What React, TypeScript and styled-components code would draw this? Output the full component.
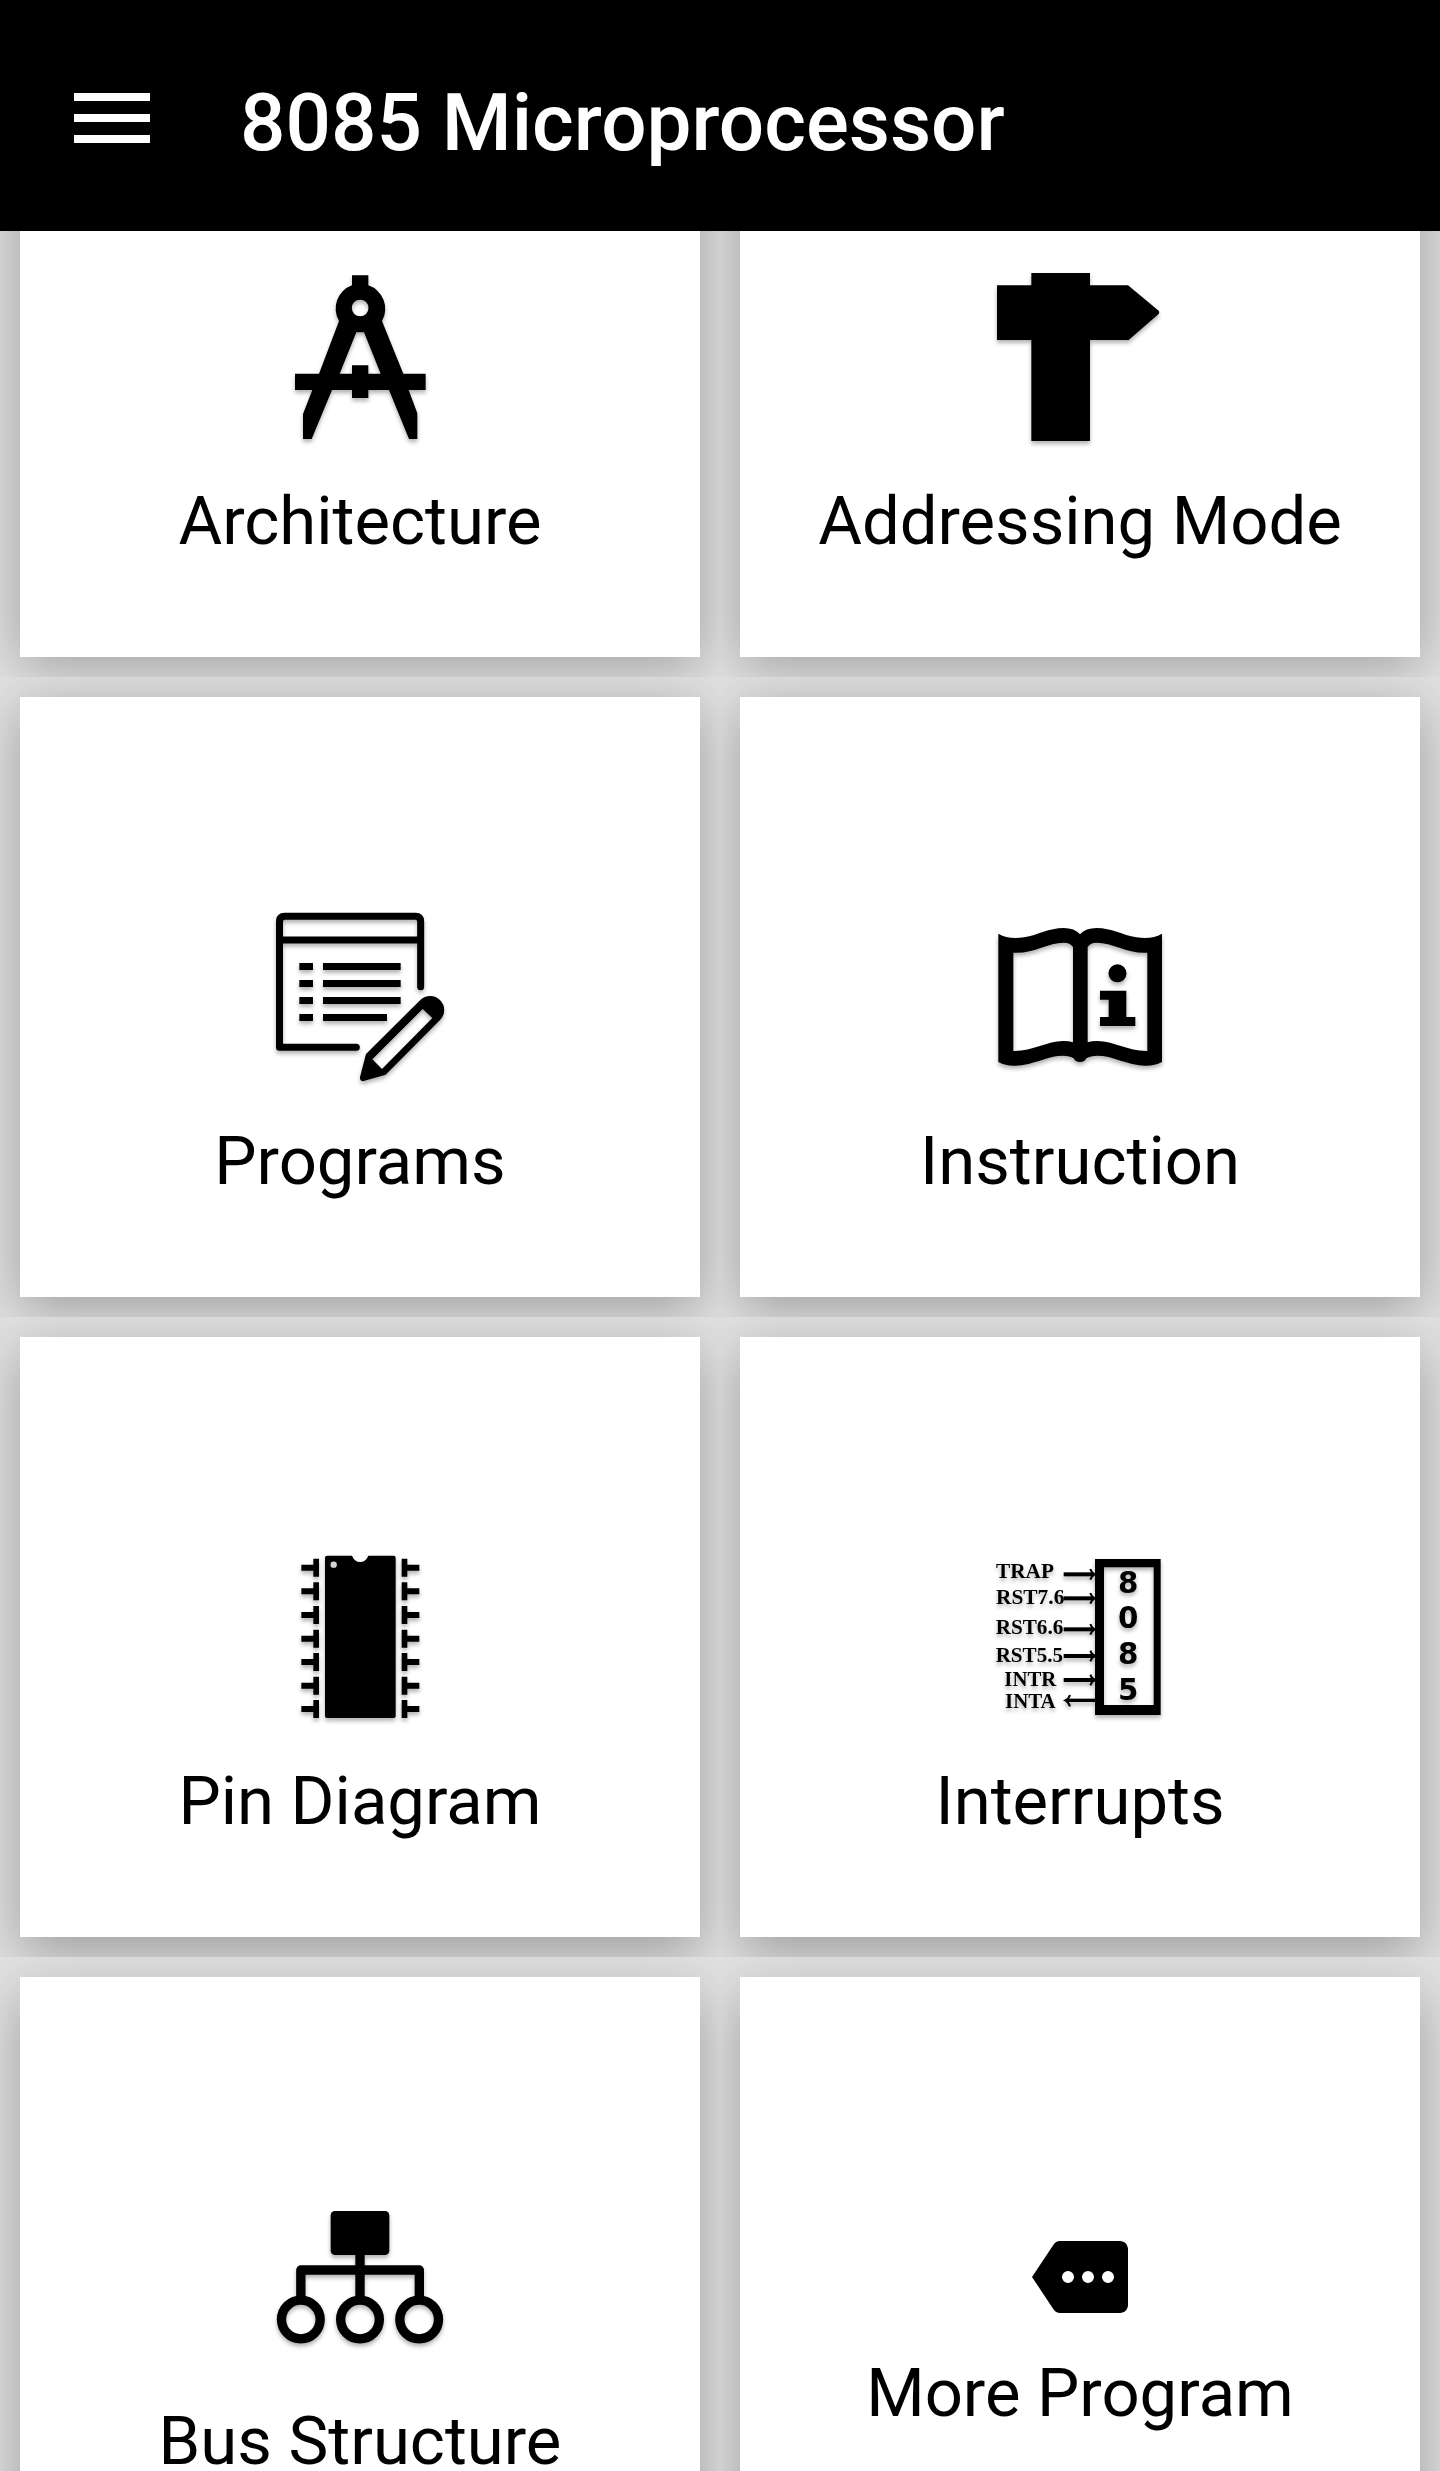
import type { ReactNode } from "react";
import styled, { createGlobalStyle, css } from "styled-components";

const GlobalStyle = createGlobalStyle`
  html,
  body {
    margin: 0;
    padding: 0;
    background-color: #e0e0e0;
  }
`;

const Screen = styled.div`
  width: 1440px;
  height: 2471px;
  display: flex;
  flex-direction: column;
  overflow: hidden;
  background-color: #e0e0e0;
  font-family: Roboto, "Liberation Sans", sans-serif;
`;

const Header = styled.header`
  height: 231px;
  flex-shrink: 0;
  box-sizing: border-box;
  padding: 15px 74px 0;
  display: flex;
  align-items: center;
  gap: 90px;
  background-color: #000;
`;

const MenuButton = styled.button`
  width: 76px;
  height: 50px;
  padding: 0;
  margin-bottom: 10px;
  display: flex;
  flex-direction: column;
  justify-content: space-between;
  border: 0;
  background: none;
`;

const MenuBar = styled.span`
  width: 100%;
  height: 8px;
  background-color: #fff;
`;

const Title = styled.h1`
  margin: 0;
  font-size: 80px;
  font-weight: 500;
  line-height: 94px;
  color: #fff;
  white-space: nowrap;
`;

const Content = styled.main`
  flex: 1;
  min-height: 0;
  overflow: hidden;
`;

/* the list is scrolled, so its first row is partly under the header */
const Menu = styled.div`
  margin-top: -194px;
  display: grid;
  grid-template-columns: repeat(2, 720px);
  grid-auto-rows: 640px;
`;

const Cell = styled.div`
  padding: 20px;
  display: flex;
  overflow: hidden;
`;

/* shadows get longer further down the screen */
const Card = styled.article<{ $row: number }>`
  flex: 1;
  display: grid;
  grid-template-rows: 1fr auto 1fr;
  justify-items: center;
  background-color: #fff;
  box-shadow: 0 ${({ $row }) => 8 + $row * 4}px 52px rgba(0, 0, 0, 0.3);
`;

const Icon = styled.svg<{ $small?: boolean }>`
  grid-row: 2;
  display: block;
  overflow: visible;
  ${({ $small }) =>
    $small
      ? css`
          width: 96px;
          height: 96px;
        `
      : css`
          width: 192px;
          height: 192px;
          filter: drop-shadow(0 3px 2px rgba(0, 0, 0, 0.3));
        `}
`;

const Label = styled.h2`
  grid-row: 3;
  margin: 28px 0 0;
  font-size: 67px;
  font-weight: 400;
  line-height: 80px;
  color: #000;
  white-space: nowrap;
`;

const SignalText = styled.text`
  font-family: "Liberation Serif", serif;
  font-size: 64px;
  font-weight: 700;
`;

const DigitText = styled.text`
  font-family: "DejaVu Sans", sans-serif;
  font-size: 88px;
  font-weight: 700;
  text-anchor: middle;
`;

const ArchitectureIcon = () => (
  <Icon viewBox="42 33 576 576">
    <path d="M306 76h49v30a74 74 0 0 1 41 107l64 158h67v49h-51l26 70v77h-25l-60-147h-62v24h-49v-24h-60l-61 147h-26v-75l28-72h-52v-49h72l60-158a74 74 0 0 1 39-107zM330.500 149a25 25 0 1 0 0 50a25 25 0 1 0 0-50zM319 247l-50 124h37v-25h49v25h37l-50-124z" fillRule="evenodd" />
  </Icon>
);

const SignpostIcon = () => (
  <Icon viewBox="42 33 576 576">
    <path d="M184 69h176v37h114l92 76q3 5 0 10l-90 78H360v303H184V270H81V106h103z" />
  </Icon>
);

const ProgramsIcon = () => (
  <Icon viewBox="42 33 576 576">
    <g fill="none" stroke="#000" strokeWidth="21">
      <path d="M319 472H88.500V95q0-16 16-16H496q16 0 16 16V290" strokeLinecap="round" strokeLinejoin="round" />
      <path d="M90 150H510" />
    </g>
    {[219, 270, 321, 372].map((y) => (
      <g key={y}>
        <rect x="148" y={y} width="41" height="21" />
        <rect x="219" y={y} width={y === 372 ? 192 : 233} height="21" />
      </g>
    ))}
    <path
      d="M348 492L511 330a42 42 0 0 1 59 60L407 554L341 573q-12 1-11-12zM518 357L367 508L396 537L547 384z"
      fillRule="evenodd"
    />
  </Icon>
);

const InstructionIcon = () => (
  <Icon viewBox="42 3 576 576">
    <path
      d="M85 101C107 114 130 116 163 112C204 105 237 84 281 84Q313 84 330 103Q347 84 380 84C424 84 457 105 499 112C531 116 554 114 576 101V486C550 499 530 499 499 494C456 487 424 467 382 467Q361 467 349 475Q345 486 330 486Q315 486 311 475Q300 467 279 467C237 467 205 487 163 494C132 499 109 499 85 486zM130 158V453C189 454 233 422 281 423Q296 423 309 427V141Q301 128 281 128C233 128 189 162 130 158zM353 141V427Q365 423 380 423C429 422 474 454 532 453V158C474 162 429 128 380 128Q361 128 353 141z"
      fillRule="evenodd"
    />
    <circle cx="442.500" cy="220" r="27" />
    <path d="M390 272h79v79h27v27H390v-27h26v-52h-26z" />
  </Icon>
);

const PinDiagramIcon = () => (
  <Icon viewBox="-18 33 576 576">
    <path
      d="M171 77h75q8 19 24.500 19t24.500-19h76q6 0 6 6v475q0 6-6 6H171q-6 0-6-6V83q0-6 6-6z"
    />
    <circle cx="191" cy="104" r="9.500" fill="#d5d5d5" />
    {[86, 157, 228, 299, 369, 440, 510].map((y) => (
      <g key={y}>
        <path d={`M130 ${y}h17v54h-17v-18H94v-18h36z`} />
        <path d={`M395 ${y}h17v18h36v18h-36v18h-17z`} />
      </g>
    ))}
  </Icon>
);

const signals = [
  { name: "TRAP", x: 78, y: 145, width: 174, arrowY: 133 },
  { name: "RST7.6", x: 78, y: 221, width: 205, arrowY: 205 },
  { name: "RST6.6", x: 77, y: 311, width: 203, arrowY: 298 },
  { name: "RST5.5", x: 77, y: 397, width: 202, arrowY: 378 },
  { name: "INTR", x: 103, y: 467, width: 156, arrowY: 450 },
  { name: "INTA", x: 105, y: 533, width: 152, arrowY: 511 },
];

const InterruptsIcon = () => (
  <Icon viewBox="42 33 576 576">
    <path d="M375 87h197v468H375zM402 112v413h149V112z" fillRule="evenodd" />
    {signals.map(({ name, x, y, width, arrowY }) => (
      <g key={name}>
        <SignalText x={x} y={y} textLength={width} lengthAdjust="spacingAndGlyphs">
          {name}
        </SignalText>
        {name === "INTA" ? (
          <>
            <path d={`M292 ${arrowY}H376`} stroke="#000" strokeWidth="10" />
            <path d={`M300 ${arrowY - 16}Q296 ${arrowY - 4} 286 ${arrowY}Q296 ${arrowY + 5} 300 ${arrowY + 18}`} fill="none" stroke="#000" strokeWidth="6" />
          </>
        ) : (
          <>
            <path d={`M281 ${arrowY}H372`} stroke="#000" strokeWidth="12" />
            <path d={`M361 ${arrowY - 16}Q365 ${arrowY - 4} 375 ${arrowY}Q365 ${arrowY + 4} 361 ${arrowY + 16}`} fill="none" stroke="#000" strokeWidth="6" />
          </>
        )}
      </g>
    ))}
    <DigitText x="475" y="188">8</DigitText>
    <DigitText x="475" y="295">0</DigitText>
    <DigitText x="475" y="402">8</DigitText>
    <DigitText x="475" y="509">5</DigitText>
  </Icon>
);

const BusIcon = () => (
  <Icon viewBox="42 3 576 576">
    <rect x="242" y="93" width="176" height="132" rx="13" />
    <g fill="none" stroke="#000" strokeWidth="28">
      <path d="M330 220V355M152.500 355V270H508V355" strokeLinejoin="round" />
      <circle cx="152.500" cy="418.500" r="58" />
      <circle cx="330" cy="418.500" r="58" />
      <circle cx="507.500" cy="418.500" r="58" />
    </g>
  </Icon>
);

const MoreIcon = () => (
  <Icon $small viewBox="0 0 24 24">
    <path
      d="M22 3H7c-.69 0-1.230.350-1.590.880L0 12l5.410 8.110c.360.530.900.890 1.590.890h15c1.100 0 2-.900 2-2V5c0-1.100-.900-2-2-2zM9 13.500a1.500 1.500 0 1 1 0-3a1.500 1.500 0 1 1 0 3zm5 0a1.500 1.500 0 1 1 0-3a1.500 1.500 0 1 1 0 3zm5 0a1.500 1.500 0 1 1 0-3a1.500 1.500 0 1 1 0 3z"
      fillRule="evenodd"
    />
  </Icon>
);

type TMenuItem = {
  label: string;
  icon: ReactNode;
};

const items: TMenuItem[] = [
  { label: "Architecture", icon: <ArchitectureIcon /> },
  { label: "Addressing Mode", icon: <SignpostIcon /> },
  { label: "Programs", icon: <ProgramsIcon /> },
  { label: "Instruction", icon: <InstructionIcon /> },
  { label: "Pin Diagram", icon: <PinDiagramIcon /> },
  { label: "Interrupts", icon: <InterruptsIcon /> },
  { label: "Bus Structure", icon: <BusIcon /> },
  { label: "More Program", icon: <MoreIcon /> },
];

const App = () => {
  return (
    <>
      <GlobalStyle />
      <Screen>
        <Header>
          <MenuButton type="button" aria-label="Menu">
            <MenuBar />
            <MenuBar />
            <MenuBar />
          </MenuButton>
          <Title>8085 Microprocessor</Title>
        </Header>
        <Content>
          <Menu>
            {items.map(({ label, icon }, index) => (
              <Cell key={label}>
                <Card $row={Math.floor(index / 2)}>
                  {icon}
                  <Label>{label}</Label>
                </Card>
              </Cell>
            ))}
          </Menu>
        </Content>
      </Screen>
    </>
  );
};

export default App;
